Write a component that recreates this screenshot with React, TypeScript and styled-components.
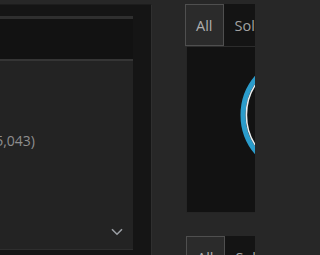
import styled, { createGlobalStyle } from "styled-components";

const GlobalStyle = createGlobalStyle`
  html, body {
    margin: 0;
    padding: 0;
    background: #272727;
    overflow: hidden;
  }
  body {
    font-family: "Open Sans", "Liberation Sans", sans-serif;
  }
`;

const Page = styled.div`
  display: flex;
  align-items: flex-start;
  width: 255px;
  height: 255px;
  overflow: hidden;
  gap: 33px;
`;

const LeftPanel = styled.div`
  flex: 0 0 152px;
  height: 260px;
  margin-top: 4px;
  padding-right: 18px;
  box-sizing: border-box;
  background: #151515;
  border-top: 1px solid #1d1d1d;
  border-right: 1px solid #2f2f2f;
  display: flex;
  flex-direction: column;
`;

const PanelHeader = styled.div`
  height: 11px;
`;

const Toolbar = styled.div`
  height: 40px;
  border-top: 3px solid #2f2f2f;
  background: #121212;
`;

const Card = styled.div`
  height: 191px;
  box-sizing: border-box;
  background: #232323;
  border-top: 2px solid #353535;
  border-bottom: 1px solid #2e2e2e;
  display: flex;
  flex-direction: column;
  padding-top: 70px;
  overflow: hidden;
`;

const CountLine = styled.div`
  margin-left: -17px;
  white-space: nowrap;
  font-size: 14px;
  line-height: 19px;
  color: #8e8e8e;
`;

const CardFooter = styled.div`
  margin-top: auto;
  display: flex;
  justify-content: flex-end;
  padding: 0 10px 13px 0;
`;

const RightColumn = styled.div`
  flex: 0 0 230px;
  margin-top: 4px;
  display: flex;
  flex-direction: column;
`;

const Tabs = styled.div`
  display: flex;
  height: 42px;
  border-bottom: 1px solid #2c2c2c;
`;

const Tab = styled.div<{ $active?: boolean }>`
  display: flex;
  align-items: center;
  padding: 0 10px;
  box-sizing: border-box;
  font-size: 14.5px;
  color: ${(p) => (p.$active ? "#aeaeae" : "#a2a2a2")};
  background: ${(p) => (p.$active ? "#2b2b2b" : "#141414")};
  border: 1px solid ${(p) => (p.$active ? "#4f4f4f" : "#141414")};
`;

const ChartBox = styled.div`
  height: 166px;
  box-sizing: border-box;
  margin-left: 1px;
  background: #121212;
  border: 1px solid #252525;
  border-top: none;
  display: flex;
  justify-content: center;
  padding-top: 6px;
`;

const SecondTabs = styled(Tabs)`
  margin-top: 23px;
  margin-left: 1px;
`;

function Chevron() {
  return (
    <svg width="12" height="8" viewBox="0 0 12 8">
      <path
        d="M1 1.2 L6 6.2 L11 1.2"
        fill="none"
        stroke="#9a9ea4"
        strokeWidth="1.6"
      />
    </svg>
  );
}

function Donut() {
  return (
    <svg width="124" height="124" viewBox="0 0 124 124">
      <circle cx="62" cy="62" r="58" fill="none" stroke="#2b9ccb" strokeWidth="5" />
      <circle cx="62" cy="62" r="54.6" fill="none" stroke="#e8eef0" strokeWidth="1.6" />
    </svg>
  );
}

export default function App() {
  return (
    <>
      <GlobalStyle />
      <Page>
        <LeftPanel>
          <PanelHeader />
          <Toolbar />
          <Card>
            <CountLine>(25,043)</CountLine>
            <CardFooter>
              <Chevron />
            </CardFooter>
          </Card>
        </LeftPanel>
        <RightColumn>
          <Tabs>
            <Tab $active>All</Tab>
            <Tab>Sold</Tab>
          </Tabs>
          <ChartBox>
            <Donut />
          </ChartBox>
          <SecondTabs>
            <Tab $active>All</Tab>
            <Tab>Sold</Tab>
          </SecondTabs>
        </RightColumn>
      </Page>
    </>
  );
}
